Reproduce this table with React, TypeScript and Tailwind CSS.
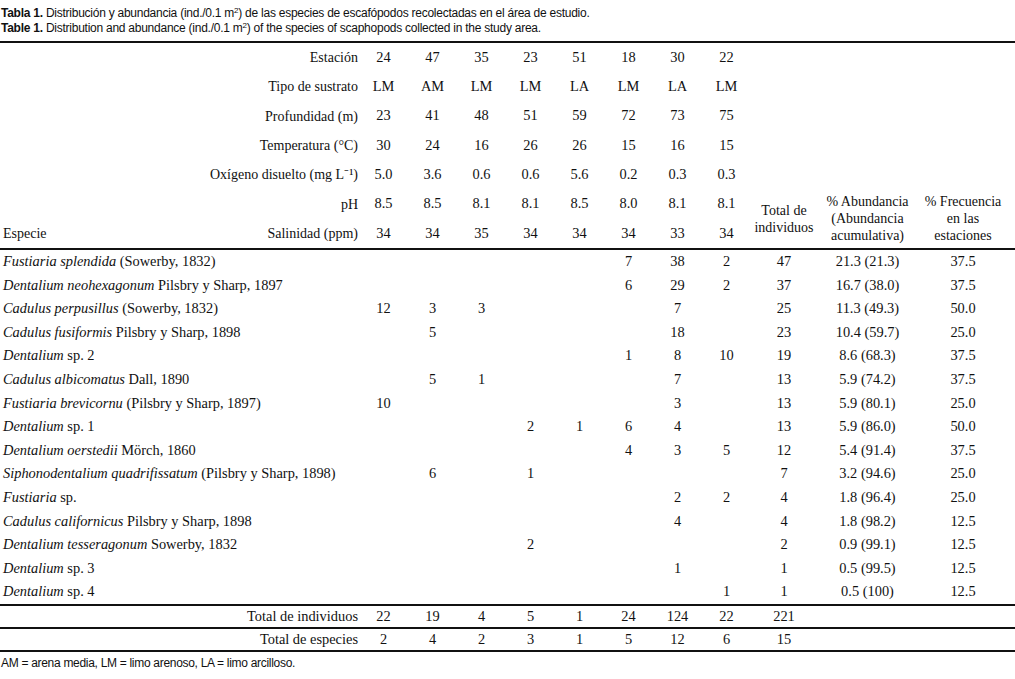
import React from "react";

const cols = "grid grid-cols-[359px_repeat(8,49px)_66px_101px_90px_1fr]";

const headerRows: [string, string[]][] = [
  ["Estación", ["24", "47", "35", "23", "51", "18", "30", "22"]],
  ["Tipo de sustrato", ["LM", "AM", "LM", "LM", "LA", "LM", "LA", "LM"]],
  ["Profundidad (m)", ["23", "41", "48", "51", "59", "72", "73", "75"]],
  ["Temperatura (°C)", ["30", "24", "16", "26", "26", "15", "16", "15"]],
  ["Oxígeno disuelto (mg L⁻¹)", ["5.0", "3.6", "0.6", "0.6", "5.6", "0.2", "0.3", "0.3"]],
  ["pH", ["8.5", "8.5", "8.1", "8.1", "8.5", "8.0", "8.1", "8.1"]],
  ["Salinidad (ppm)", ["34", "34", "35", "34", "34", "34", "33", "34"]],
];

type Species = {
  genus: string;
  author: string;
  counts: string[];
  total: string;
  abundance: string;
  frequency: string;
};

const species: Species[] = [
  { genus: "Fustiaria splendida", author: " (Sowerby, 1832)", counts: ["", "", "", "", "", "7", "38", "2"], total: "47", abundance: "21.3 (21.3)", frequency: "37.5" },
  { genus: "Dentalium neohexagonum", author: " Pilsbry y Sharp, 1897", counts: ["", "", "", "", "", "6", "29", "2"], total: "37", abundance: "16.7 (38.0)", frequency: "37.5" },
  { genus: "Cadulus perpusillus", author: " (Sowerby, 1832)", counts: ["12", "3", "3", "", "", "", "7", ""], total: "25", abundance: "11.3 (49.3)", frequency: "50.0" },
  { genus: "Cadulus fusiformis", author: " Pilsbry y Sharp, 1898", counts: ["", "5", "", "", "", "", "18", ""], total: "23", abundance: "10.4 (59.7)", frequency: "25.0" },
  { genus: "Dentalium", author: " sp. 2", counts: ["", "", "", "", "", "1", "8", "10"], total: "19", abundance: "8.6 (68.3)", frequency: "37.5" },
  { genus: "Cadulus albicomatus", author: " Dall, 1890", counts: ["", "5", "1", "", "", "", "7", ""], total: "13", abundance: "5.9 (74.2)", frequency: "37.5" },
  { genus: "Fustiaria brevicornu", author: " (Pilsbry y Sharp, 1897)", counts: ["10", "", "", "", "", "", "3", ""], total: "13", abundance: "5.9 (80.1)", frequency: "25.0" },
  { genus: "Dentalium", author: " sp. 1", counts: ["", "", "", "2", "1", "6", "4", ""], total: "13", abundance: "5.9 (86.0)", frequency: "50.0" },
  { genus: "Dentalium oerstedii", author: " Mörch, 1860", counts: ["", "", "", "", "", "4", "3", "5"], total: "12", abundance: "5.4 (91.4)", frequency: "37.5" },
  { genus: "Siphonodentalium quadrifissatum", author: " (Pilsbry y Sharp, 1898)", counts: ["", "6", "", "1", "", "", "", ""], total: "7", abundance: "3.2 (94.6)", frequency: "25.0" },
  { genus: "Fustiaria", author: " sp.", counts: ["", "", "", "", "", "", "2", "2"], total: "4", abundance: "1.8 (96.4)", frequency: "25.0" },
  { genus: "Cadulus californicus", author: " Pilsbry y Sharp, 1898", counts: ["", "", "", "", "", "", "4", ""], total: "4", abundance: "1.8 (98.2)", frequency: "12.5" },
  { genus: "Dentalium tesseragonum", author: " Sowerby, 1832", counts: ["", "", "", "2", "", "", "", ""], total: "2", abundance: "0.9 (99.1)", frequency: "12.5" },
  { genus: "Dentalium", author: " sp. 3", counts: ["", "", "", "", "", "", "1", ""], total: "1", abundance: "0.5 (99.5)", frequency: "12.5" },
  { genus: "Dentalium", author: " sp. 4", counts: ["", "", "", "", "", "", "", "1"], total: "1", abundance: "0.5 (100)", frequency: "12.5" },
];

const totals: [string, string[], string][] = [
  ["Total de individuos", ["22", "19", "4", "5", "1", "24", "124", "22"], "221"],
  ["Total de especies", ["2", "4", "2", "3", "1", "5", "12", "6"], "15"],
];

export default function App() {
  return (
    <div className="min-h-[679px] w-[1015px] bg-white text-[#111]">
      <div className="px-[1px] pt-[6px] font-['Liberation_Sans',Arial,sans-serif] text-[12px] leading-[15px] tracking-[-0.25px]">
        <p>
          <span className="font-bold">Tabla 1.</span> Distribución y abundancia (ind./0.1 m
          <sup className="text-[8px]">2</sup>) de las especies de escafópodos recolectadas en el área de estudio.
        </p>
        <p>
          <span className="font-bold">Table 1.</span> Distribution and abundance (ind./0.1 m
          <sup className="text-[8px]">2</sup>) of the species of scaphopods collected in the study area.
        </p>
      </div>

      <div className="mt-[5px] font-['Liberation_Serif','Times_New_Roman',serif] text-[14.4px]">
        <div className={`${cols} grid-rows-[repeat(7,29.3px)] border-y-2 border-[#111] text-[14px]`}>
          {headerRows.map(([label, values], r) => (
            <React.Fragment key={label}>
              <div
                className="flex items-center justify-between pl-[3px] pr-[1px]"
                style={{ gridRow: r + 1, gridColumn: 1 }}
              >
                <span>{r === 6 ? "Especie" : ""}</span>
                <span>{label}</span>
              </div>
              {values.map((v, c) => (
                <div
                  key={c}
                  className="flex items-center justify-center text-[14.4px]"
                  style={{ gridRow: r + 1, gridColumn: c + 2 }}
                >
                  {v}
                </div>
              ))}
            </React.Fragment>
          ))}
          <div className="col-start-10 row-start-6 row-span-2 flex items-center justify-center text-center leading-[17px]">
            Total de
            <br />
            individuos
          </div>
          <div className="col-start-11 row-start-6 row-span-2 flex items-center justify-center text-center leading-[17px]">
            % Abundancia
            <br />
            (Abundancia
            <br />
            acumulativa)
          </div>
          <div className="col-start-12 row-start-6 row-span-2 flex items-center justify-center text-center leading-[17px]">
            % Frecuencia
            <br />
            en las
            <br />
            estaciones
          </div>
        </div>

        <div className="border-b-2 border-[#111]">
          {species.map((s) => (
            <div key={s.genus + s.author} className={`${cols} h-[23.6px] items-center`}>
              <div className="pl-[3px]">
                <i>{s.genus}</i>
                {s.author}
              </div>
              {s.counts.map((v, c) => (
                <div key={c} className="text-center">
                  {v}
                </div>
              ))}
              <div className="text-center">{s.total}</div>
              <div className="text-center">{s.abundance}</div>
              <div className="text-center">{s.frequency}</div>
            </div>
          ))}
        </div>

        {totals.map(([label, values, total]) => (
          <div key={label} className={`${cols} h-[23px] items-center border-b-2 border-[#111]`}>
            <div className="pr-[1px] text-right">{label}</div>
            {values.map((v, c) => (
              <div key={c} className="text-center">
                {v}
              </div>
            ))}
            <div className="text-center">{total}</div>
          </div>
        ))}
      </div>

      <p className="px-[1px] pt-[2px] font-['Liberation_Sans',Arial,sans-serif] text-[12px] tracking-[-0.3px]">
        AM = arena media, LM = limo arenoso, LA = limo arcilloso.
      </p>
    </div>
  );
}
